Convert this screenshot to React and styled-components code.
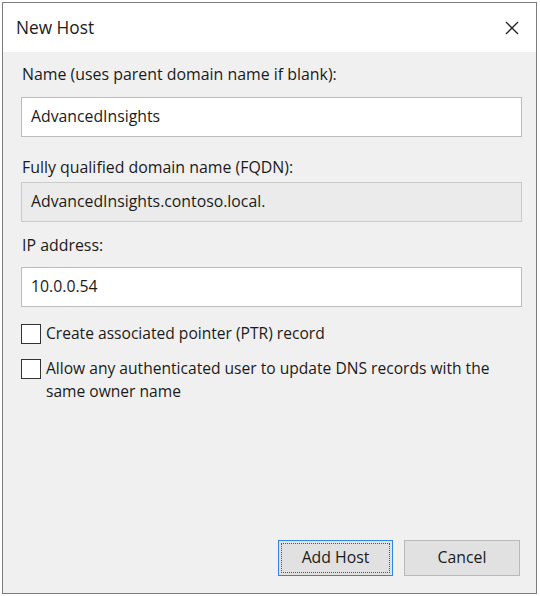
import styled, { createGlobalStyle } from "styled-components";

const GlobalStyle = createGlobalStyle`
	html, body {
		margin: 0;
		padding: 0;
		background: #ffffff;
	}
	body {
		font-family: "Open Sans", "Noto Sans", "Liberation Sans", sans-serif;
		color: #1b1b1b;
	}
`;

const Page = styled.div`
	padding: 2px 0 0 2px;
`;

const Window = styled.div`
	width: 535px;
	height: 592px;
	box-sizing: border-box;
	border: 1px solid #7c7c7c;
	display: flex;
	flex-direction: column;
	background: #f0f0f0;
`;

const TitleBar = styled.div`
	height: 49px;
	flex-shrink: 0;
	background: #ffffff;
	display: flex;
	align-items: center;
	justify-content: space-between;
	padding: 0 17px 0 13px;
	font-size: 17.3px;
`;

const CloseButton = styled.div`
	width: 14px;
	height: 14px;
	display: flex;
	align-items: center;
	justify-content: center;
`;

const Content = styled.div`
	flex: 1;
	display: flex;
	flex-direction: column;
	padding: 12px 14px 17px 18px;
`;

const Label = styled.div`
	font-size: 15.9px;
	line-height: 20px;
	padding-left: 1px;
	margin-top: ${(p) => p.$top || 0}px;
	margin-bottom: ${(p) => p.$bottom || 0}px;
`;

const Field = styled.div`
	height: 40px;
	box-sizing: border-box;
	border: 1px solid ${(p) => (p.$readOnly ? "#cbcbcb" : "#bcbcbc")};
	background: ${(p) => (p.$readOnly ? "#ebebeb" : "#ffffff")};
	display: flex;
	align-items: center;
	padding: 0 0 2px 9px;
	font-size: 15.8px;
`;

const CheckRow = styled.div`
	display: flex;
	align-items: flex-start;
	gap: 5px;
	margin-top: ${(p) => p.$top}px;
	font-size: 15.6px;
	line-height: 23px;
`;

const Box = styled.div`
	width: 20px;
	height: 20px;
	box-sizing: border-box;
	flex-shrink: 0;
	border: 1.5px solid #333333;
	background: #ffffff;
	margin-top: 1px;
`;

const CheckText = styled.div`
	margin-top: -1px;
`;

const ButtonRow = styled.div`
	margin-top: auto;
	display: flex;
	justify-content: flex-end;
	gap: 11px;
	padding-right: 2px;
`;

const Button = styled.div`
	width: ${(p) => p.$width}px;
	height: 36px;
	box-sizing: border-box;
	border: 1px solid ${(p) => (p.$primary ? "#2f86e0" : "#b9b9b9")};
	background: #e1e1e1;
	display: flex;
	align-items: center;
	justify-content: center;
	font-size: 15.8px;
	position: relative;
	padding-bottom: 2px;

	&::after {
		content: "";
		display: ${(p) => (p.$primary ? "block" : "none")};
		position: absolute;
		inset: 2px;
		border: 1px dotted #555555;
	}
`;

const App = () => {
	return (
		<Page>
			<GlobalStyle />
			<Window>
				<TitleBar>
					<span>New Host</span>
					<CloseButton>
						<svg width="14" height="14" viewBox="0 0 14 14">
							<path d="M1 1 L13 13 M13 1 L1 13" stroke="#222" strokeWidth="1.3" fill="none" />
						</svg>
					</CloseButton>
				</TitleBar>
				<Content>
					<Label $bottom={13}>Name (uses parent domain name if blank):</Label>
					<Field>AdvancedInsights</Field>
					<Label $top={20} $bottom={5}>
						Fully qualified domain name (FQDN):
					</Label>
					<Field $readOnly>AdvancedInsights.contoso.local.</Field>
					<Label $top={13} $bottom={12}>
						IP address:
					</Label>
					<Field>10.0.0.54</Field>
					<CheckRow $top={16}>
						<Box />
						<CheckText>Create associated pointer (PTR) record</CheckText>
					</CheckRow>
					<CheckRow $top={13}>
						<Box />
						<CheckText>
							Allow any authenticated user to update DNS records with the
							<br />
							same owner name
						</CheckText>
					</CheckRow>
					<ButtonRow>
						<Button $primary $width={115}>
							Add Host
						</Button>
						<Button $width={116}>Cancel</Button>
					</ButtonRow>
				</Content>
			</Window>
		</Page>
	);
};

export default App;
